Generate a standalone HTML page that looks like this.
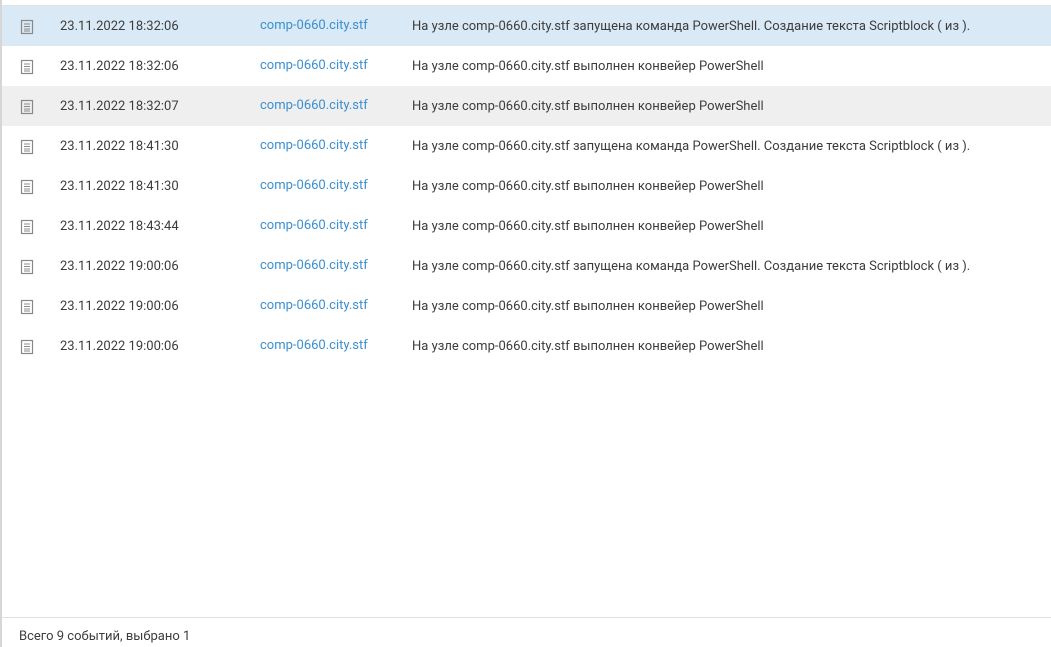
<!DOCTYPE html>
<html><head><meta charset="utf-8"><style>
body{margin:0;width:1051px;height:647px;background:#fff;font-family:Roboto,"Liberation Sans",sans-serif;font-size:13px;color:#3c3c3c;position:relative;overflow:hidden}
.lb{position:absolute;left:0;top:0;width:2px;height:647px;background:#d6d6d6}
.tl{position:absolute;left:2px;right:0;top:5px;height:1px;background:#e2e2e2}
.row{position:absolute;left:2px;right:0;height:40px}
.row span{position:absolute;top:13px;white-space:nowrap}
.ic{position:absolute;left:18px;top:13px}
.d{left:58px}.h{left:258px;color:#3a8fd0;top:12px!important}.m{left:410px}
.fl{position:absolute;left:2px;right:0;top:617px;height:1px;background:#e0e0e0}
.ft{position:absolute;left:19px;top:629px;font-size:13px;color:#3c3c3c}
</style></head><body>
<div class="lb"></div><div class="tl"></div>
<div class="row" style="top:6px;background:#d9e9f5"><svg class="ic" width="14" height="16"><rect x="1.5" y="1.5" width="11" height="13" fill="none" stroke="#888" stroke-width="1.2"/><path d="M4 5h6M4 7.5h6M4 10h6M4 12h6" stroke="#888" stroke-width="1"/></svg><span class="d">23.11.2022 18:32:06</span><span class="h">comp-0660.city.stf</span><span class="m">На узле comp-0660.city.stf запущена команда PowerShell. Создание текста Scriptblock ( из ).</span></div>
<div class="row" style="top:46px"><svg class="ic" width="14" height="16"><rect x="1.5" y="1.5" width="11" height="13" fill="none" stroke="#888" stroke-width="1.2"/><path d="M4 5h6M4 7.5h6M4 10h6M4 12h6" stroke="#888" stroke-width="1"/></svg><span class="d">23.11.2022 18:32:06</span><span class="h">comp-0660.city.stf</span><span class="m">На узле comp-0660.city.stf выполнен конвейер PowerShell</span></div>
<div class="row" style="top:86px;background:#efefef"><svg class="ic" width="14" height="16"><rect x="1.5" y="1.5" width="11" height="13" fill="none" stroke="#888" stroke-width="1.2"/><path d="M4 5h6M4 7.5h6M4 10h6M4 12h6" stroke="#888" stroke-width="1"/></svg><span class="d">23.11.2022 18:32:07</span><span class="h">comp-0660.city.stf</span><span class="m">На узле comp-0660.city.stf выполнен конвейер PowerShell</span></div>
<div class="row" style="top:126px"><svg class="ic" width="14" height="16"><rect x="1.5" y="1.5" width="11" height="13" fill="none" stroke="#888" stroke-width="1.2"/><path d="M4 5h6M4 7.5h6M4 10h6M4 12h6" stroke="#888" stroke-width="1"/></svg><span class="d">23.11.2022 18:41:30</span><span class="h">comp-0660.city.stf</span><span class="m">На узле comp-0660.city.stf запущена команда PowerShell. Создание текста Scriptblock ( из ).</span></div>
<div class="row" style="top:166px"><svg class="ic" width="14" height="16"><rect x="1.5" y="1.5" width="11" height="13" fill="none" stroke="#888" stroke-width="1.2"/><path d="M4 5h6M4 7.5h6M4 10h6M4 12h6" stroke="#888" stroke-width="1"/></svg><span class="d">23.11.2022 18:41:30</span><span class="h">comp-0660.city.stf</span><span class="m">На узле comp-0660.city.stf выполнен конвейер PowerShell</span></div>
<div class="row" style="top:206px"><svg class="ic" width="14" height="16"><rect x="1.5" y="1.5" width="11" height="13" fill="none" stroke="#888" stroke-width="1.2"/><path d="M4 5h6M4 7.5h6M4 10h6M4 12h6" stroke="#888" stroke-width="1"/></svg><span class="d">23.11.2022 18:43:44</span><span class="h">comp-0660.city.stf</span><span class="m">На узле comp-0660.city.stf выполнен конвейер PowerShell</span></div>
<div class="row" style="top:246px"><svg class="ic" width="14" height="16"><rect x="1.5" y="1.5" width="11" height="13" fill="none" stroke="#888" stroke-width="1.2"/><path d="M4 5h6M4 7.5h6M4 10h6M4 12h6" stroke="#888" stroke-width="1"/></svg><span class="d">23.11.2022 19:00:06</span><span class="h">comp-0660.city.stf</span><span class="m">На узле comp-0660.city.stf запущена команда PowerShell. Создание текста Scriptblock ( из ).</span></div>
<div class="row" style="top:286px"><svg class="ic" width="14" height="16"><rect x="1.5" y="1.5" width="11" height="13" fill="none" stroke="#888" stroke-width="1.2"/><path d="M4 5h6M4 7.5h6M4 10h6M4 12h6" stroke="#888" stroke-width="1"/></svg><span class="d">23.11.2022 19:00:06</span><span class="h">comp-0660.city.stf</span><span class="m">На узле comp-0660.city.stf выполнен конвейер PowerShell</span></div>
<div class="row" style="top:326px"><svg class="ic" width="14" height="16"><rect x="1.5" y="1.5" width="11" height="13" fill="none" stroke="#888" stroke-width="1.2"/><path d="M4 5h6M4 7.5h6M4 10h6M4 12h6" stroke="#888" stroke-width="1"/></svg><span class="d">23.11.2022 19:00:06</span><span class="h">comp-0660.city.stf</span><span class="m">На узле comp-0660.city.stf выполнен конвейер PowerShell</span></div>
<div class="fl"></div>
<div class="ft">Всего 9 событий, выбрано 1</div>
</body></html>
